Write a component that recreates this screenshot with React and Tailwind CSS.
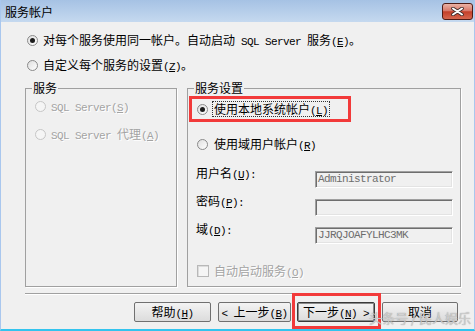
import React from "react";

// monospace run, stands in for the SimSun half-width glyphs
function M({ children, className = "" }) {
  return (
    <span className={`font-['Liberation_Mono',monospace] text-[11px] leading-[9px] tracking-[-0.6px] ${className}`}>
      {children}
    </span>
  );
}

// accelerator key, e.g. (E)
function Acc({ k }) {
  return (
    <M>
      (<span className="underline underline-offset-1">{k}</span>)
    </M>
  );
}

function Radio({ checked, disabled }) {
  return (
    <span
      className={`w-[11px] h-[11px] rounded-full border flex items-center justify-center shrink-0 ${
        disabled
          ? "border-[#c6c6c6] bg-[#f5f5f5]"
          : "border-[#8a8a8a] bg-gradient-to-br from-[#dedede] to-white"
      }`}
    >
      {checked && <span className="w-[5px] h-[5px] rounded-full bg-[#1c1c1c]" />}
    </span>
  );
}

function Field({ value }) {
  return (
    <div className="w-[138px] h-[17px] mt-[5px] border border-t-[#a0a0a0] border-l-[#a0a0a0] border-b-white border-r-white shadow-[inset_1px_1px_0_#6e6e6e,inset_-1px_-1px_0_#e3e3e3] bg-[#f0f0f0] pl-[2px] flex items-center text-[#6d6d6d]">
      <M>{value}</M>
    </div>
  );
}

function Btn({ className, primary, children }) {
  return (
    <div
      className={`h-[20px] rounded-[2px] border flex items-center justify-center bg-gradient-to-b from-[#f3f3f3] to-[#dcdcdc] ${
        primary ? "border-[#3a3a3a] shadow-[inset_0_0_0_1px_#8a8a8a]" : "border-[#707070]"
      } ${className}`}
    >
      <span>{children}</span>
    </div>
  );
}

function Group({ title, className, children }) {
  return (
    <div className={`h-[199px] border border-[#a0a0a0] shadow-[1px_1px_0_#fff] pl-[9px] flex flex-col ${className}`}>
      <span className="-mt-[8px] -ml-[3px] w-fit h-[14px] px-[1px] bg-[#f0f0f0]">{title}</span>
      {children}
    </div>
  );
}

export default function App() {
  const dim = "text-[#a3a3a3] [text-shadow:1px_1px_0_#fff]";

  return (
    <div className="relative w-[475px] h-[331px] overflow-hidden flex flex-col bg-[#f0f0f0] border-x border-x-[#a9c7ee] border-b-2 border-b-[#33c4ee] font-['Noto_Sans_CJK_SC',sans-serif] text-[12px] leading-[14px] text-black">
      {/* title bar */}
      <div className="h-[22px] shrink-0 flex items-start justify-between bg-gradient-to-b from-[#a6c2e4] to-[#c5d9ef] pl-[4px] pr-[1px]">
        <span className="mt-[5px]">服务帐户</span>
        <div className="mt-[3px] w-[31px] h-[17px] rounded-[3px] border border-[#4f1c16] bg-[linear-gradient(#ebb3a5,#d8796a_45%,#c3402a_52%,#d6674f)] flex items-center justify-center">
          <svg width="13" height="9" viewBox="0 0 13 9">
            <path d="M2 1.5 L11 7.5 M11 1.5 L2 7.5" stroke="#3b2a28" strokeWidth="3.6" strokeLinecap="round" />
            <path d="M2 1.5 L11 7.5 M11 1.5 L2 7.5" stroke="#fff" strokeWidth="2" strokeLinecap="round" />
          </svg>
        </div>
      </div>

      {/* body */}
      <div className="flex-1 flex flex-col pl-[24px]">
        <div className="mt-[11px] h-[14px] pl-[2px] flex items-center gap-[5px]">
          <Radio checked />
          <span>
            对每个服务使用同一帐户。自动启动<M> SQL Server </M>服务<Acc k="E" />。
          </span>
        </div>
        <div className="mt-[11px] h-[14px] pl-[2px] flex items-center gap-[5px]">
          <Radio />
          <span>
            自定义每个服务的设置<Acc k="Z" />。
          </span>
        </div>

        <div className="mt-[16px] flex gap-[10px]">
          <Group title="服务" className="w-[152px]">
            <div className={`mt-[4px] h-[14px] flex items-center gap-[5px] ${dim}`}>
              <Radio disabled />
              <span>
                <M>SQL Server</M>
                <Acc k="S" />
              </span>
            </div>
            <div className={`mt-[14px] h-[14px] flex items-center gap-[5px] ${dim}`}>
              <Radio disabled />
              <span>
                <M>SQL Server </M>代理<Acc k="A" />
              </span>
            </div>
          </Group>

          <Group title="服务设置" className="w-[274px]">
            <div className="mt-[7px] h-[14px] flex items-center gap-[4px]">
              <Radio checked />
              <span className="border border-dotted border-[#333] px-[1px] leading-[13px]">
                使用本地系统帐户<Acc k="L" />
              </span>
            </div>
            <div className="mt-[21px] h-[14px] flex items-center gap-[6px]">
              <Radio />
              <span>
                使用域用户帐户<Acc k="R" />
              </span>
            </div>

            <div className="mt-[15px] -ml-[1px] flex flex-col">
              <div className="h-[28px] flex items-start">
                <span className="w-[119px] h-[14px]">
                  用户名<Acc k="U" />
                  <M>:</M>
                </span>
                <Field value="Administrator" />
              </div>
              <div className="h-[28px] flex items-start">
                <span className="w-[119px] h-[14px]">
                  密码<Acc k="P" />
                  <M>:</M>
                </span>
                <Field value="" />
              </div>
              <div className="h-[28px] flex items-start">
                <span className="w-[119px] h-[14px]">
                  域<Acc k="D" />
                  <M>:</M>
                </span>
                <Field value="JJRQJOAFYLHC3MK" />
              </div>
            </div>

            <div className={`mt-[14px] h-[14px] flex items-center gap-[5px] ${dim}`}>
              <span className="w-[12px] h-[12px] border border-[#b8b8b8] bg-[#f5f5f5] shadow-[inset_1px_1px_0_#dcdcdc]" />
              <span>
                自动启动服务<Acc k="O" />
              </span>
            </div>
          </Group>
        </div>

        <div className="mt-[6px] w-[436px] h-[2px] border-t border-t-[#a0a0a0] border-b border-b-white" />

        <div className="mt-[7px] w-[436px] pr-[3px] flex justify-end">
          <Btn className="w-[77px]">
            帮助<Acc k="H" />
          </Btn>
          <Btn className="w-[73px] ml-[7px]">
            <M>&lt;&nbsp;</M>上一步<Acc k="B" />
          </Btn>
          <Btn className="w-[78px] ml-[6px]" primary>
            下一步<Acc k="N" />
            <M>&nbsp;&gt;</M>
          </Btn>
          <Btn className="w-[76px] ml-[7px]">取消</Btn>
        </div>
      </div>

      {/* annotations */}
      <div className="absolute left-[188px] top-[96px] w-[162px] h-[26px] border-[3px] border-[#f23a3a]" />
      <div className="absolute left-[291px] top-[293px] w-[89px] h-[36px] border-[3px] border-[#f23a3a]" />
      <div className="absolute left-[368px] top-[311px] text-[13px] text-[#dcdcdc]/75 [text-shadow:0_0_1px_#888]">
        头条号 / 民人娱乐
      </div>
    </div>
  );
}
